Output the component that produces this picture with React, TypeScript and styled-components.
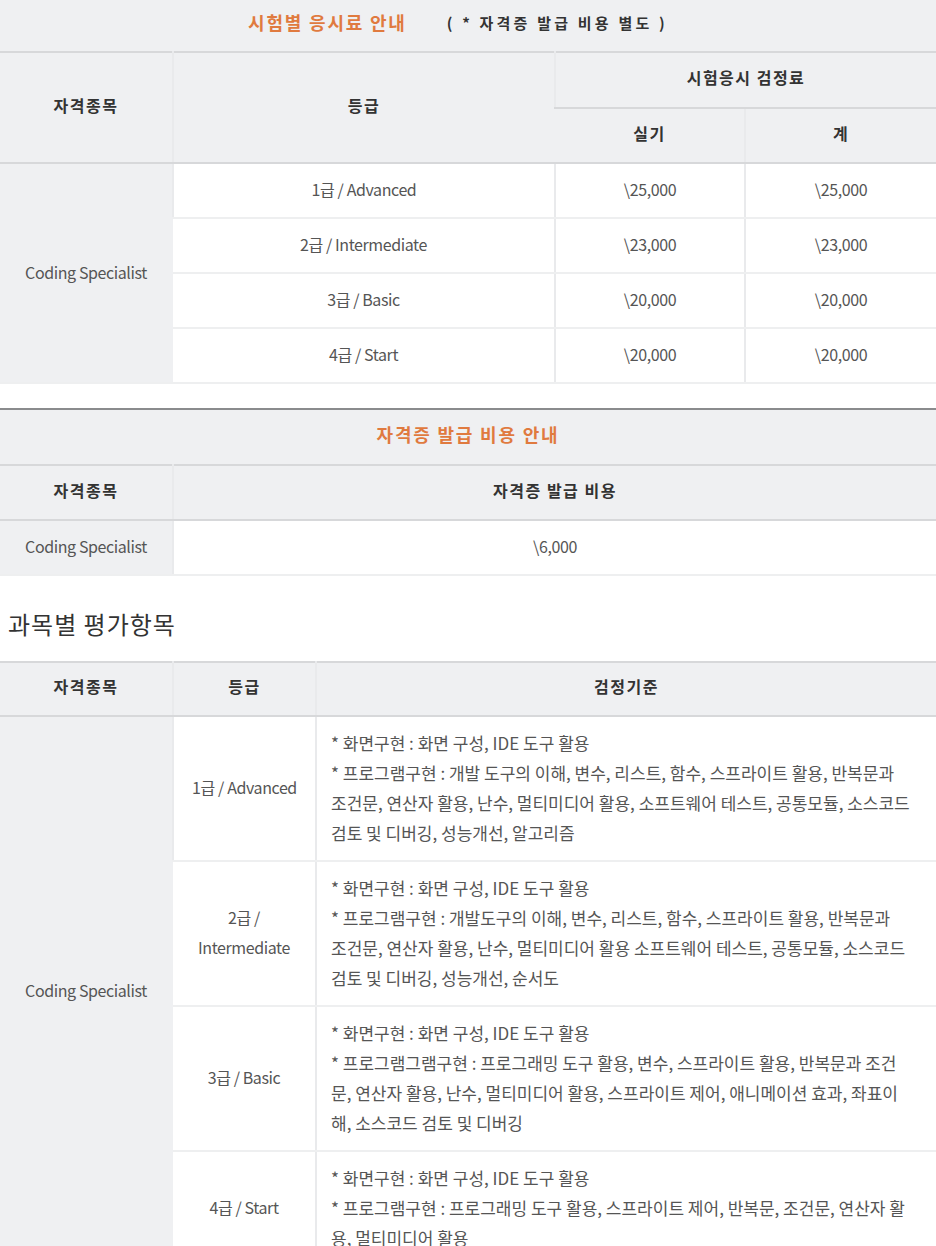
import React from "react";
import styled, { createGlobalStyle } from "styled-components";

const GlobalStyle = createGlobalStyle`
  html, body { margin: 0; padding: 0; background: #ffffff; }
  body {
    font-family: "Noto Sans CJK KR", "Noto Sans", sans-serif;
    color: #555555;
  }
`;

const GREY = "#eff0f2";
const LINE = "#d7d8da";
const SOFT = "#e9eaec";

const Page = styled.div`
  width: 936px;
`;

const Section = styled.section<{ $top?: string; $gap?: number }>`
  margin-top: ${(p) => p.$gap ?? 0}px;
  border-top: ${(p) => (p.$top ? `2px solid ${p.$top}` : "none")};
`;

const Caption = styled.div<{ $h: number; $shift?: number }>`
  height: ${(p) => p.$h}px;
  box-sizing: border-box;
  padding: 0 ${(p) => p.$shift ?? 0}px 7px 0;
  display: flex;
  align-items: center;
  justify-content: center;
  background: ${GREY};
`;

const Title = styled.span`
  color: #e07a3f;
  font-weight: 700;
  font-size: 18px;
  letter-spacing: 1.8px;
`;

const Note = styled.span`
  margin-left: 40px;
  color: #333333;
  font-weight: 700;
  font-size: 15px;
  letter-spacing: 3.2px;
`;

const Heading = styled.h2`
  margin: 31px 0 20px 8px;
  font-size: 24px;
  line-height: 34px;
  font-weight: 400;
  letter-spacing: 1px;
  color: #333333;
`;

const Table = styled.table`
  width: 936px;
  border-collapse: collapse;
  table-layout: fixed;
  border-top: 2px solid ${LINE};
`;

const Th = styled.th<{ $h?: number }>`
  height: ${(p) => p.$h ?? 53}px;
  box-sizing: border-box;
  padding: 0 0 6px;
  background: ${GREY};
  color: #333333;
  font-size: 16px;
  font-weight: 700;
  letter-spacing: 1.5px;
  text-align: center;
  border-left: 2px solid ${SOFT};
  border-bottom: 2px solid ${LINE};
  &:first-child {
    border-left: none;
  }
`;

const Td = styled.td<{ $grey?: boolean; $h?: number }>`
  height: ${(p) => p.$h ?? 53}px;
  box-sizing: border-box;
  padding: 0 10px 3px;
  background: ${(p) => (p.$grey ? GREY : "#ffffff")};
  color: #555555;
  font-size: 16px;
  line-height: 30px;
  letter-spacing: -0.4px;
  text-align: center;
  border-left: 2px solid ${SOFT};
  border-bottom: 2px solid #eeeff0;
  &:first-child {
    border-left: none;
  }
`;

const Criteria = styled.td<{ $keep?: boolean }>`
  padding: 11px 26px 12px 14px;
  background: #ffffff;
  color: #555555;
  font-size: 17px;
  line-height: 30px;
  letter-spacing: 0;
  text-align: left;
  vertical-align: middle;
  word-break: ${(p) => (p.$keep ? "keep-all" : "normal")};
  border-left: 2px solid ${SOFT};
  border-bottom: 2px solid #eeeff0;
`;

const Line = styled.div``;

const fees = [
  { grade: "1급 / Advanced", fee: "\\25,000" },
  { grade: "2급 / Intermediate", fee: "\\23,000" },
  { grade: "3급 / Basic", fee: "\\20,000" },
  { grade: "4급 / Start", fee: "\\20,000" },
];

const criteria = [
  {
    grade: "1급 / Advanced",
    keep: false,
    lines: [
      "* 화면구현 : 화면 구성, IDE 도구 활용",
      "* 프로그램구현 : 개발 도구의 이해, 변수, 리스트, 함수, 스프라이트 활용, 반복문과 조건문, 연산자 활용, 난수, 멀티미디어 활용, 소프트웨어 테스트, 공통모듈, 소스코드 검토 및 디버깅, 성능개선, 알고리즘",
    ],
  },
  {
    grade: "2급 / Intermediate",
    keep: true,
    lines: [
      "* 화면구현 : 화면 구성, IDE 도구 활용",
      "* 프로그램구현 : 개발도구의 이해, 변수, 리스트, 함수, 스프라이트 활용, 반복문과 조건문, 연산자 활용, 난수, 멀티미디어 활용 소프트웨어 테스트, 공통모듈, 소스코드 검토 및 디버깅, 성능개선, 순서도",
    ],
  },
  {
    grade: "3급 / Basic",
    keep: false,
    lines: [
      "* 화면구현 : 화면 구성, IDE 도구 활용",
      "* 프로그램그램구현 : 프로그래밍 도구 활용, 변수, 스프라이트 활용, 반복문과 조건문, 연산자 활용, 난수, 멀티미디어 활용, 스프라이트 제어, 애니메이션 효과, 좌표이해, 소스코드 검토 및 디버깅",
    ],
  },
  {
    grade: "4급 / Start",
    keep: false,
    lines: [
      "* 화면구현 : 화면 구성, IDE 도구 활용",
      "* 프로그램구현 : 프로그래밍 도구 활용, 스프라이트 제어, 반복문, 조건문, 연산자 활용, 멀티미디어 활용",
    ],
  },
];

export default function App() {
  return (
    <Page>
      <GlobalStyle />
      <Section>
        <Caption $h={51} $shift={20}>
          <Title>시험별 응시료 안내</Title>
          <Note>( * 자격증 발급 비용 별도 )</Note>
        </Caption>
        <Table>
          <colgroup>
            <col style={{ width: 173 }} />
            <col style={{ width: 382 }} />
            <col style={{ width: 190 }} />
            <col style={{ width: 191 }} />
          </colgroup>
          <thead>
            <tr>
              <Th rowSpan={2}>자격종목</Th>
              <Th rowSpan={2}>등급</Th>
              <Th colSpan={2} $h={56}>
                시험응시 검정료
              </Th>
            </tr>
            <tr>
              <Th $h={55}>실기</Th>
              <Th $h={55}>계</Th>
            </tr>
          </thead>
          <tbody>
            {fees.map((f, i) => (
              <tr key={f.grade}>
                {i === 0 && (
                  <Td $grey rowSpan={fees.length}>
                    Coding Specialist
                  </Td>
                )}
                <Td $h={55}>{f.grade}</Td>
                <Td $h={55}>{f.fee}</Td>
                <Td $h={55}>{f.fee}</Td>
              </tr>
            ))}
          </tbody>
        </Table>
      </Section>

      <Section $top="#8a8b8d" $gap={24}>
        <Caption $h={54}>
          <Title>자격증 발급 비용 안내</Title>
        </Caption>
        <Table>
          <colgroup>
            <col style={{ width: 173 }} />
            <col style={{ width: 763 }} />
          </colgroup>
          <thead>
            <tr>
              <Th $h={55}>자격종목</Th>
              <Th $h={55}>자격증 발급 비용</Th>
            </tr>
          </thead>
          <tbody>
            <tr>
              <Td $grey $h={55}>
                Coding Specialist
              </Td>
              <Td $h={55}>\6,000</Td>
            </tr>
          </tbody>
        </Table>
      </Section>

      <Heading>과목별 평가항목</Heading>

      <Section>
        <Table>
          <colgroup>
            <col style={{ width: 173 }} />
            <col style={{ width: 143 }} />
            <col style={{ width: 620 }} />
          </colgroup>
          <thead>
            <tr>
              <Th $h={54}>자격종목</Th>
              <Th $h={54}>등급</Th>
              <Th $h={54}>검정기준</Th>
            </tr>
          </thead>
          <tbody>
            {criteria.map((c, i) => (
              <tr key={c.grade}>
                {i === 0 && (
                  <Td $grey rowSpan={criteria.length}>
                    Coding Specialist
                  </Td>
                )}
                <Td>{c.grade}</Td>
                <Criteria $keep={c.keep}>
                  {c.lines.map((l) => (
                    <Line key={l}>{l}</Line>
                  ))}
                </Criteria>
              </tr>
            ))}
          </tbody>
        </Table>
      </Section>
    </Page>
  );
}
